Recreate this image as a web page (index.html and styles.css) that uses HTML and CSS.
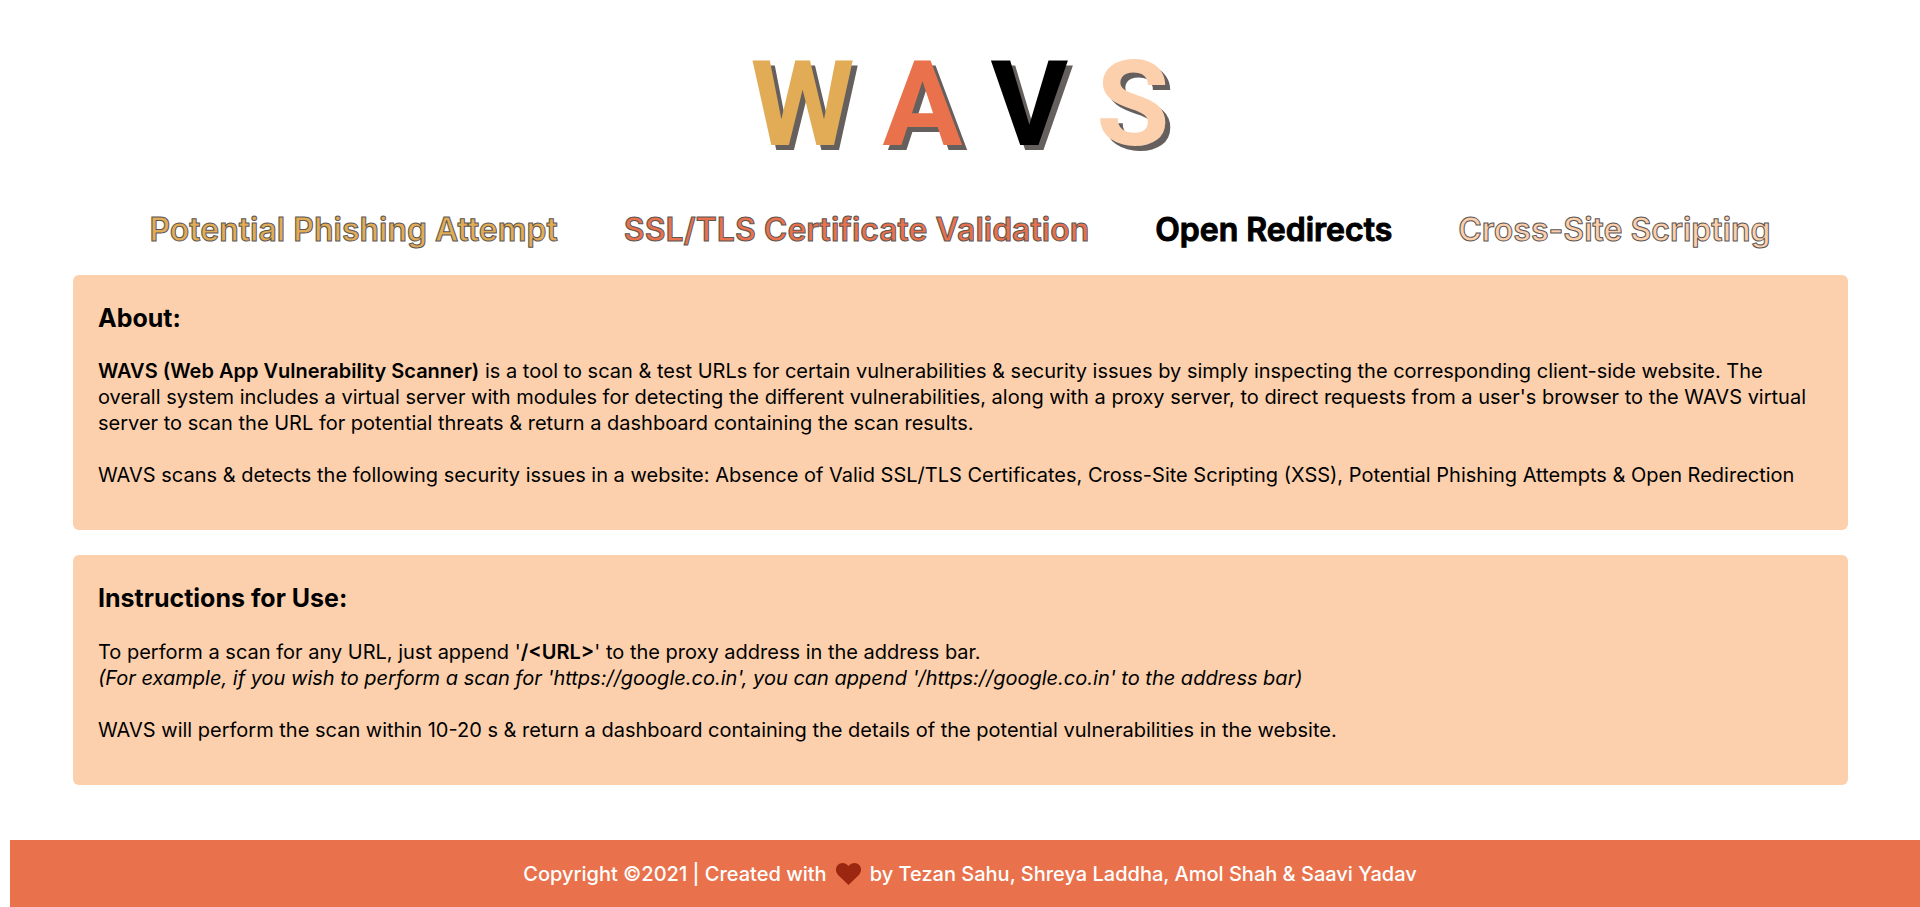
FILE: index.html
```html
<!DOCTYPE html>
<html lang="en">
<head>
<meta charset="utf-8">
<meta name="viewport" content="width=device-width, initial-scale=1">
<title>WAVS</title>
<link rel="stylesheet" href="styles.css">
</head>
<body>
<header class="header">
  <h1 class="logo" aria-label="WAVS"><span class="gold">W</span><span class="coral">A</span><span class="black">V</span><span class="peach">S</span></h1>
  <ul class="checks">
    <li class="gold">Potential Phishing Attempt</li>
    <li class="coral">SSL/TLS Certificate Validation</li>
    <li class="black">Open Redirects</li>
    <li class="peach">Cross-Site Scripting</li>
  </ul>
</header>
<main class="content">
  <section class="card">
    <h2>About:</h2>
    <p><strong>WAVS (Web App Vulnerability Scanner)</strong> is a tool to scan &amp; test URLs for certain vulnerabilities &amp; security issues by simply inspecting the corresponding client-side website. The overall system includes a virtual server with modules for detecting the different vulnerabilities, along with a proxy server, to direct requests from a user's browser to the WAVS virtual server to scan the URL for potential threats &amp; return a dashboard containing the scan results.</p>
    <p>WAVS scans &amp; detects the following security issues in a website: Absence of Valid SSL/TLS Certificates, Cross-Site Scripting (XSS), Potential Phishing Attempts &amp; Open Redirection</p>
  </section>
  <section class="card">
    <h2>Instructions for Use:</h2>
    <p>To perform a scan for any URL, just append '<strong>/&lt;URL&gt;</strong>' to the proxy address in the address bar.<br>
    <em>(For example, if you wish to perform a scan for 'https://google.co.in', you can append '/https://google.co.in' to the address bar)</em></p>
    <p>WAVS will perform the scan within 10-20 s &amp; return a dashboard containing the details of the potential vulnerabilities in the website.</p>
  </section>
</main>
<footer class="footer">
  <span>Copyright ©2021 | Created with</span>
  <svg class="heart" viewBox="0 0 25 22" role="img" aria-label="love"><path d="M12.5 22 2.3 12.2C-.8 9-.7 4.600 1.700 2.100 4.600-.8 9.600-.6 12.500 3 15.400-.6 20.400-.8 23.300 2.100 25.700 4.600 25.800 9 22.700 12.200Z"/></svg>
  <span>by Tezan Sahu, Shreya Laddha, Amol Shah &amp; Saavi Yadav</span>
</footer>
</body>
</html>
```
FILE: styles.css
```css
* { box-sizing: border-box; }

body {
  margin: 0;
  overflow-x: hidden;
  background: #fff;
  color: #000;
  font: 20px/26px Inter, "Liberation Sans", sans-serif;
}

.gold { color: #e2ac56; }
.coral { color: #e9724c; }
.black { color: #000; }
.peach { color: #fcd0ad; }

.header {
  padding: 45px 72px 25px;
}

.logo {
  display: flex;
  justify-content: center;
  gap: 28px;
  margin: 0 0 45px;
  font: 700 119px/120px Roboto, sans-serif;
  text-shadow: 5px 5px 0 #655f5e;
}

.checks {
  display: flex;
  flex-wrap: wrap;
  justify-content: center;
  gap: 0 66px;
  margin: 0;
  padding: 0;
  list-style: none;
  font-size: 32px;
  font-weight: 600;
  line-height: 40px;
  -webkit-text-stroke: 1px #5c5654;
}

.checks .black { -webkit-text-stroke-color: #000; }

.content {
  display: flex;
  flex-direction: column;
  gap: 25px;
  padding: 0 72px 55px 73px;
}

.card {
  padding: 27px 25px 42px;
  border-radius: 6px;
  background: #fcd0ad;
}

.card h2 {
  margin: 0 0 23px;
  font-size: 25px;
  line-height: 33px;
}

.card p { margin: 0; }
.card p + p { margin-top: 26px; }
.card strong { font-weight: 600; }
.card + .card h2 { margin-bottom: 24px; }

.footer {
  display: flex;
  justify-content: center;
  align-items: center;
  gap: 9px;
  width: 100%;
  margin-left: 10px;
  padding: 21px 0 20px;
  background: #e9724c;
  color: #fff;
  font-weight: 500;
}

.heart {
  width: 25px;
  height: 22px;
  fill: #9c2711;
}
```
